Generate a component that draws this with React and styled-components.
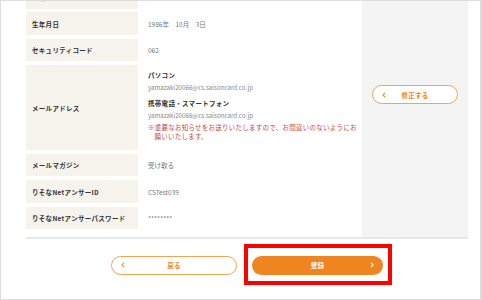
import React from 'react';
import styled, { createGlobalStyle } from 'styled-components';

const GlobalStyle = createGlobalStyle`
    html, body {
        margin: 0;
        padding: 0;
        background: #ffffff;
    }
    body {
        font-family: "Noto Sans CJK JP", "Noto Sans", sans-serif;
    }
`;

const Frame = styled.div`
    width: 482px;
    height: 300px;
    box-sizing: border-box;
    border: 1px solid #dcdcdc;
    border-right-width: 2px;
    overflow: hidden;
    background: #ffffff;
`;

const Card = styled.div`
    display: flex;
    margin: -15.2px 12px 0 25px;
    border-bottom: 2px solid #e6e9ea;
`;

const Table = styled.div`
    display: flex;
    flex-direction: column;
    gap: 3.8px;
    width: 336px;
    min-width: 0;
    flex-shrink: 0;
    padding-bottom: 7.6px;
`;

const Row = styled.div`
    display: flex;
    height: ${props => props.tall ? '84.7px' : '22.7px'};
`;

const Label = styled.div`
    width: 112px;
    flex-shrink: 0;
    box-sizing: border-box;
    padding-left: 6px;
    display: flex;
    align-items: center;
    background: #f6f3ec;
    color: #333333;
    font-size: 6.5px;
    font-weight: 700;
    letter-spacing: 0.3px;
    white-space: nowrap;
`;

const Value = styled.div`
    flex: 1;
    box-sizing: border-box;
    padding-left: 10px;
    display: flex;
    align-items: center;
    color: #777777;
    font-size: 6.5px;
    white-space: nowrap;
`;

const MailValue = styled.div`
    flex: 1;
    min-width: 0;
    box-sizing: border-box;
    padding: 5px 0 0 10px;
    display: flex;
    flex-direction: column;
    font-size: 6.5px;
`;

const Heading = styled.div`
    line-height: 10px;
    font-weight: 700;
    color: #333333;
    letter-spacing: 0.3px;
    margin-bottom: 3px;
`;

const Email = styled.div`
    line-height: 10px;
    color: #8a8a8a;
    font-size: 6.2px;
    margin-bottom: ${props => props.last ? '2px' : '5px'};
`;

const Note = styled.div`
    line-height: 9px;
    color: #c8463b;
    letter-spacing: 0.25px;
    white-space: nowrap;
    padding-left: 1em;
    text-indent: -1em;
`;

const Side = styled.div`
    width: 106px;
    flex-shrink: 0;
    box-sizing: border-box;
    padding: 99.5px 10px 0;
    background: #f4f4f4;
`;

const OutlineButton = styled.button`
    display: flex;
    align-items: center;
    position: relative;
    width: ${props => props.width}px;
    height: 19px;
    box-sizing: border-box;
    padding: 0 0 0 9px;
    border: 1.5px solid #f2a453;
    border-radius: 10px;
    background: #ffffff;
    color: #ee8523;
    font-family: inherit;
    font-size: 6.5px;
    font-weight: 700;
    cursor: pointer;
`;

const FilledButton = styled.button`
    display: flex;
    align-items: center;
    position: relative;
    width: 131px;
    height: 19px;
    box-sizing: border-box;
    padding: 0 9px 0 0;
    border: none;
    border-radius: 10px;
    background: #ee8521;
    color: #ffffff;
    font-family: inherit;
    font-size: 6.5px;
    font-weight: 700;
    cursor: pointer;
`;

const ButtonText = styled.span`
    position: absolute;
    left: 0;
    right: 0;
    text-align: center;
    letter-spacing: 0.3px;
`;

const Chevron = styled.svg`
    width: 4px;
    height: 6px;
    margin-left: ${props => props.right ? 'auto' : '0'};
`;

const Footer = styled.div`
    display: flex;
    justify-content: center;
    align-items: center;
    gap: 15px;
    padding: 16.5px 12px 0 25px;
`;

const Highlight = styled.div`
    position: relative;

    &::after {
        content: '';
        position: absolute;
        top: -12px;
        bottom: -10px;
        left: -8px;
        right: -9px;
        border: 4px solid #ff0000;
        pointer-events: none;
    }
`;

const Left = () => (
    <Chevron viewBox="0 0 4 6">
        <path d="M3 0.8 L1 3 L3 5.2" fill="none" stroke="currentColor" strokeWidth="1.1" />
    </Chevron>
);

const Right = () => (
    <Chevron right viewBox="0 0 4 6">
        <path d="M1 0.8 L3 3 L1 5.2" fill="none" stroke="currentColor" strokeWidth="1.1" />
    </Chevron>
);

const rows = [
    ['氏名（カナ）', 'ヤマザキ　タロウ'],
    ['生年月日', '1986年　10月　3日'],
    ['セキュリティコード', '062'],
];

const rowsAfter = [
    ['メールマガジン', '受け取る'],
    ['りそなNetアンサーID', 'CSTest039'],
    ['りそなNetアンサーパスワード', '********'],
];

export default function App() {
    return (
        <>
            <GlobalStyle />
            <Frame>
                <Card>
                    <Table>
                        {rows.map(([label, value]) => (
                            <Row key={label}>
                                <Label>{label}</Label>
                                <Value>{value}</Value>
                            </Row>
                        ))}
                        <Row tall>
                            <Label>メールアドレス</Label>
                            <MailValue>
                                <Heading>パソコン</Heading>
                                <Email>yamazaki20066@cs.saisoncard.co.jp</Email>
                                <Heading>携帯電話・スマートフォン</Heading>
                                <Email last>yamazaki20066@cs.saisoncard.co.jp</Email>
                                <Note>
                                    ※重要なお知らせをお送りいたしますので、お間違いのないようにお
                                    <br />
                                    願いいたします。
                                </Note>
                            </MailValue>
                        </Row>
                        {rowsAfter.map(([label, value]) => (
                            <Row key={label}>
                                <Label>{label}</Label>
                                <Value>{value}</Value>
                            </Row>
                        ))}
                    </Table>
                    <Side>
                        <OutlineButton width={86}>
                            <Left />
                            <ButtonText>修正する</ButtonText>
                        </OutlineButton>
                    </Side>
                </Card>
                <Footer>
                    <OutlineButton width={126}>
                        <Left />
                        <ButtonText>戻る</ButtonText>
                    </OutlineButton>
                    <Highlight>
                        <FilledButton>
                            <ButtonText>登録</ButtonText>
                            <Right />
                        </FilledButton>
                    </Highlight>
                </Footer>
            </Frame>
        </>
    );
}
